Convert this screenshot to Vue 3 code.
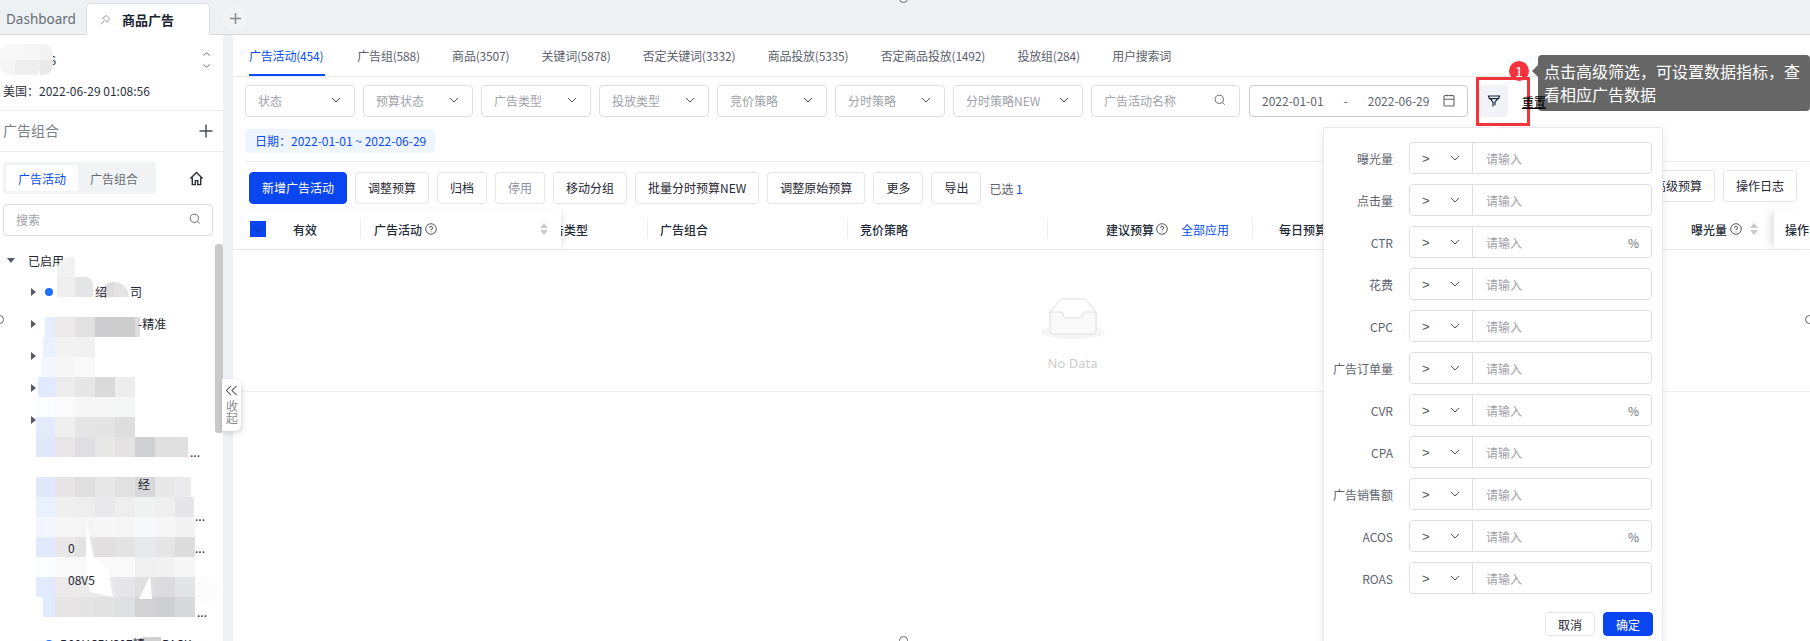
<script setup>
const tabs = ['广告活动(454)', '广告组(588)', '商品(3507)', '关键词(5878)', '否定关键词(3332)', '商品投放(5335)', '否定商品投放(1492)', '投放组(284)', '用户搜索词']
const selects = [
  { t: '状态' }, { t: '预算状态' }, { t: '广告类型' }, { t: '投放类型' },
  { t: '竞价策略' }, { t: '分时策略' }, { t: '分时策略NEW', wide: true }
]
const actions = ['调整预算', '归档', '停用', '移动分组', '批量分时预算NEW', '调整原始预算', '更多', '导出']
const metrics = [
  { l: '曝光量' }, { l: '点击量' }, { l: 'CTR', p: true }, { l: '花费' }, { l: 'CPC' }, { l: '广告订单量' },
  { l: 'CVR', p: true }, { l: 'CPA' }, { l: '广告销售额' }, { l: 'ACOS', p: true }, { l: 'ROAS' }
]
const treeRows = [
  { caret: true, dot: true, frags: [{ t: '绍', x: 95 }, { t: '司', x: 130 }] },
  { caret: true, dot: true, frags: [{ t: '-精准', x: 138 }] },
  { caret: true, frags: [] },
  { caret: true, frags: [] },
  { caret: true, frags: [] },
  { frags: [{ t: '...', x: 190 }] },
  { frags: [{ t: '经', x: 138 }] },
  { frags: [{ t: '...', x: 195 }] },
  { frags: [{ t: '0', x: 68 }, { t: '...', x: 195 }] },
  { frags: [{ t: '08V5', x: 68 }] },
  { dot: true, frags: [{ t: '...', x: 197 }] },
  { dot: true, frags: [{ t: 'B00HCBVS07精', x: 60 }, { t: 'PACK', x: 162 }] }
]
const rawMosaic = [
  { x: 57, c: ['#f2f2f2'], rl: 14 },
  { x: 57, c: ['#eeeeee', '#e4e5e5'], lw: 18, r: 8 },
  { c: [] },
  { x: 45, c: ['#e6edfd', '#ebe9ea', '#e2e1e1', '#cdcdcf', '#cdcdce', '#dddddd'], lw: 5 },
  { x: 43, c: ['#e9f0fe', '#f3f2f2', '#f1f1f1'] },
  { x: 41, c: ['#f4f7ff', '#f6f6f6', '#f9f9f9'] },
  { x: 38, c: ['#e0e9fd', '#ececec', '#e7e6e7', '#dadada', '#ededed'] },
  { x: 37, c: ['#fcfdff', '#fbfbfb', '#f7f7f7', '#f6f6f6', '#f5f6f6'] },
  { x: 36, c: ['#e2eafb', '#efefef', '#e5e5e5', '#e4e4e4', '#dedede'] },
  { x: 36, c: ['#e0e9fc', '#e8e6e6', '#dfdfe3', '#e8e8e6', '#e4e2e2', '#cfd0d3', '#dfdfdf', '#e0e0e0'], lw: 13 },
  { c: [] },
  { x: 36, c: ['#e0e9fc', '#e7e5e5', '#e0e0e1', '#e7e7e7', '#e2e1e1', '#d8d8da', '#e8e8e8', '#ebebed'], lw: 16 },
  { x: 36, c: ['#e9f0fe', '#efefef', '#eeeeee', '#e9e9eb', '#eeeeef', '#f0f1f1', '#efefef', '#e6e6e8'], lw: 19 },
  { x: 36, c: ['#f4f7ff', '#f6f6f6', '#f5f5f5', '#f7f7f7', '#f6f6f6', '#f7f8f9', '#f6f6f6', '#f3f3f3'] },
  { x: 36, c: ['#e1eafd', '#e9e7e7', '#e3e3e3', '#e1dfe0', '#e3e3e3', '#e7eaea', '#e5e5e5', '#dcdcdd'] },
  { x: 36, c: ['#fcfdff', '#f9f9f9', '#f8f9f8', '#f8f9f8', '#f8f9f8', '#f0f0f0', '#f1f1f1', '#f6f6f6'] },
  { x: 36, c: ['#e2ebfd', '#ebe9e9', '#ecebeb', '#eae8ea', '#e6e6e8', '#dfdfdf', '#dcdcde', '#e3e4e5'] },
  { x: 43, c: ['#e2ebfd', '#e6e4e4', '#e4e4e4', '#e2e2e2', '#dfe0e4', '#d2d1d3', '#cecfd0', '#d8d9da'] }
]
const mosaic = rawMosaic.map((row) => {
  const start = row.x || 36
  const cells = row.c.map((color, i) => {
    let width = 20
    if (i === 0) width = start < 55 ? 55 - start : 75 - start
    if (i === row.c.length - 1 && row.lw) width = row.lw
    return { color, width }
  })
  return { pad: start - 36, cells, r: row.r || 0, rl: row.rl || 0 }
})
</script>

<template>
  <div class="page">
    <header class="tabbar">
      <span class="tb-dash">Dashboard</span>
      <div class="tb-active">
        <svg class="pin" viewBox="0 0 14 14" width="12" height="12" fill="none" stroke="#9aa0a8" stroke-width="1.1">
          <path d="M8.3 1.5 12.5 5.7 11.3 6.3 9.3 9.8 4.2 4.7 7.7 2.7ZM6.2 7.8 2 12" />
        </svg>
        <span class="tb-title">商品广告</span>
      </div>
      <div class="tb-add">
        <svg viewBox="0 0 14 14" width="13" height="13" stroke="#858b93" stroke-width="1.6"><path d="M7 1v12M1 7h12" /></svg>
      </div>
    </header>

    <div class="body">
      <aside class="side">
        <div class="acct">
          <span class="acct-name">S</span>
          <svg viewBox="0 0 10 20" width="9" height="18" fill="none" stroke="#666" stroke-width="1"><path d="M1.5 5 5 2l3.5 3M1.5 15 5 18l3.5-3" /></svg>
        </div>
        <div class="acct-time">美国：2022-06-29 01:08:56</div>
        <div class="grp-head">
          <span>广告组合</span>
          <svg viewBox="0 0 14 14" width="14" height="14" stroke="#4a4f57" stroke-width="1.5"><path d="M7 .5v13M.5 7h13" /></svg>
        </div>
        <div class="seg-row">
          <div class="seg">
            <span class="seg-on">广告活动</span>
            <span class="seg-off">广告组合</span>
          </div>
          <svg class="home" viewBox="0 0 16 16" width="15" height="15" fill="none" stroke="#2b3038" stroke-width="1.5">
            <path d="M1.5 8 8 1.5 14.5 8M3.5 7v7.5h3.2v-4.2h2.6v4.2h3.2V7" />
          </svg>
        </div>
        <div class="search">
          <span>搜索</span>
          <svg viewBox="0 0 14 14" width="12" height="12" fill="none" stroke="#666" stroke-width="1.1"><circle cx="6.2" cy="6.2" r="4.8" /><path d="m9.8 9.8 2.6 2.6" /></svg>
        </div>
        <div class="tree">
          <div class="tree-head">
            <i class="caret-down"></i>
            <span>已启用</span>
          </div>
          <div v-for="(row, i) in treeRows" :key="i" class="tree-row">
            <i v-if="row.caret" class="caret-right"></i>
            <i v-if="row.dot" class="dot"></i>
            <span v-for="f in row.frags" :key="f.t" class="frag" :style="{ left: f.x + 'px' }">{{ f.t }}</span>
          </div>
        </div>
        <div class="mosaic">
          <div v-for="(row, i) in mosaic" :key="i" class="m-row" :style="{ paddingLeft: row.pad + 'px' }">
            <span
              v-for="(cell, j) in row.cells"
              :key="j"
              class="m-cell"
              :style="{
                width: cell.width + 'px',
                background: cell.color,
                borderTopRightRadius: j === row.cells.length - 1 ? row.r + 'px' : 0,
                borderTopLeftRadius: j === 0 ? row.rl + 'px' : 0
              }"
            ></span>
          </div>
          <svg class="m-white" width="233" height="384" viewBox="36 257 197 384">
            <polygon points="68,519 76,558 90,567 95,597 72,592 68,577" fill="#fff" />
            <polygon points="121,599 132,576 134,599" fill="#fff" />
          </svg>
        </div>
        <span class="m-blob m-blob-a"></span>
        <span class="m-blob m-blob-b"></span>
        <span class="m-blob m-blob-c"></span>
        <span class="m-blob m-blob-d"></span>
        <span class="m-blob m-blob-e"></span>
        <span class="m-blob m-blob-f"></span>
        <span class="m-blob m-blob-g"></span>
        <span class="m-blob m-blob-h"></span>
        <span class="m-blob m-blob-i"></span>
        <span class="m-blob m-blob-j"></span>
        <span class="scroll"></span>
      </aside>

      <div class="gutter">
        <div class="collapse">
          <svg viewBox="0 0 14 12" width="13" height="11" fill="none" stroke="#555" stroke-width="1.1"><path d="M6.5 1 1.5 6l5 5M12.5 1l-5 5 5 5" /></svg>
          <span class="vtext">收起</span>
        </div>
      </div>

      <main class="main">
        <nav class="tabs">
          <span v-for="(t, i) in tabs" :key="t" class="tab" :class="{ 'tab-on': i === 0 }">{{ t }}</span>
        </nav>

        <div class="filters">
          <div v-for="s in selects" :key="s.t" class="sel" :class="{ 'sel-wide': s.wide }">
            <span>{{ s.t }}</span>
            <svg viewBox="0 0 10 6" width="10" height="6" fill="none" stroke="#555" stroke-width="1"><path d="m1 1 4 4 4-4" /></svg>
          </div>
          <div class="sel sel-name">
            <span>广告活动名称</span>
            <svg viewBox="0 0 14 14" width="12" height="12" fill="none" stroke="#666" stroke-width="1.1"><circle cx="6.2" cy="6.2" r="4.8" /><path d="m9.8 9.8 2.6 2.6" /></svg>
          </div>
          <div class="date">
            <span>2022-01-01</span>
            <span class="date-sep">-</span>
            <span>2022-06-29</span>
            <svg viewBox="0 0 12 13" width="12" height="13" fill="none" stroke="#666" stroke-width="1.1"><rect x="1" y="1.5" width="10" height="10.5" rx="1" /><path d="M1 5.2h10M4 .5v2M8 .5v2" /></svg>
          </div>
          <div class="fbtn">
            <svg viewBox="0 0 14 14" width="14" height="14" fill="none" stroke="#14233f" stroke-width="1.2"><path d="M1.5 2h11l-.9 2.6H2.4zM3.4 4.8 6 8.2v4.4M10.6 4.8 8 8.2v3" /></svg>
          </div>
          <span class="reset">重置</span>
        </div>

        <div class="pill-row"><span class="pill">日期：2022-01-01 ~ 2022-06-29</span></div>

        <div class="actions">
          <div class="act-left">
            <button class="btn btn-primary">新增广告活动</button>
            <button v-for="a in actions" :key="a" class="btn" :class="{ 'btn-dim': a === '停用' }">{{ a }}</button>
            <span class="picked">已选 <b>1</b></span>
          </div>
          <div class="act-right">
            <button class="btn">高级预算</button>
            <button class="btn">操作日志</button>
          </div>
        </div>

        <div class="thead">
          <div class="fixed-left">
            <span class="check"><svg viewBox="0 0 16 16" width="16" height="16" fill="none" stroke="#0a3fc4" stroke-width="1.4"><path d="m3.5 5 4.5 6 4.5-6" /></svg></span>
            <span class="th-valid">有效</span>
            <div class="th-camp">
              <span>广告活动</span>
              <svg class="qm" viewBox="0 0 12 12" width="12" height="12" fill="none" stroke="#444" stroke-width=".9"><circle cx="6" cy="6" r="5.3" /><path d="M4.4 4.7A1.6 1.6 0 1 1 6 6.5v.8M6 8.6v.7" /></svg>
              <span class="sorter"><i class="up"></i><i class="down"></i></span>
            </div>
          </div>
          <div class="th th-type"><span>广告类型</span></div>
          <div class="th th-200">广告组合</div>
          <div class="th th-200">竞价策略</div>
          <div class="th th-budget">
            <span>建议预算</span>
            <svg class="qm" viewBox="0 0 12 12" width="12" height="12" fill="none" stroke="#444" stroke-width=".9"><circle cx="6" cy="6" r="5.3" /><path d="M4.4 4.7A1.6 1.6 0 1 1 6 6.5v.8M6 8.6v.7" /></svg>
            <span class="link">全部应用</span>
          </div>
          <div class="th th-daily">每日预算</div>
          <div class="th-imp">
            <span>曝光量</span>
            <svg class="qm" viewBox="0 0 12 12" width="12" height="12" fill="none" stroke="#444" stroke-width=".9"><circle cx="6" cy="6" r="5.3" /><path d="M4.4 4.7A1.6 1.6 0 1 1 6 6.5v.8M6 8.6v.7" /></svg>
            <span class="sorter"><i class="up"></i><i class="down"></i></span>
          </div>
          <div class="fixed-right">操作</div>
        </div>

        <div class="empty">
          <svg width="64" height="41" viewBox="0 0 64 41">
            <g transform="translate(0 1)" fill="none" fill-rule="evenodd">
              <ellipse fill="#f5f5f5" cx="32" cy="33" rx="32" ry="7" />
              <g fill-rule="nonzero" stroke="#dedede">
                <path d="M55 12.76L44.854 1.258C44.367.474 43.656 0 42.907 0H21.093c-.749 0-1.46.474-1.947 1.257L9 12.761V22h46v-9.24z" />
                <path d="M41.613 15.931c0-1.605.994-2.93 2.227-2.931H55v18.137C55 33.26 53.68 35 52.05 35h-40.1C10.32 35 9 33.259 9 31.137V13h11.16c1.233 0 2.227 1.323 2.227 2.928v.022c0 1.605 1.005 2.901 2.237 2.901h14.752c1.232 0 2.237-1.308 2.237-2.913v-.007z" fill="#fafafa" />
              </g>
            </g>
          </svg>
          <span>No Data</span>
        </div>
      </main>
    </div>

    <section class="popover">
      <i class="pop-arrow"></i>
      <div v-for="m in metrics" :key="m.l" class="pop-row">
        <label>{{ m.l }}</label>
        <div class="pop-group">
          <div class="pop-op">
            <span class="gt">&gt;</span>
            <svg viewBox="0 0 10 6" width="10" height="6" fill="none" stroke="#555" stroke-width="1"><path d="m1 1 4 4 4-4" /></svg>
          </div>
          <div class="pop-input">
            <span>请输入</span>
            <span v-if="m.p" class="pct">%</span>
          </div>
        </div>
      </div>
      <div class="pop-foot">
        <button class="btn btn-sm">取消</button>
        <button class="btn btn-sm btn-primary">确定</button>
      </div>
    </section>

    <div class="redbox"></div>
    <div class="badge">1</div>
    <div class="tip">点击高级筛选，可设置数据指标，查看相应广告数据</div>

    <i class="handle handle-top"></i>
    <i class="handle handle-bottom"></i>
    <i class="handle handle-left"></i>
    <i class="handle handle-right"></i>
  </div>
</template>

<style scoped>
.page {
  position: relative;
  width: 1810px;
  height: 641px;
  overflow: hidden;
  background: #fff;
  display: flex;
  flex-direction: column;
  font-family: "Noto Sans CJK SC", "Noto Sans", sans-serif;
  font-size: 12px;
  color: #1f2633;
}
.tabbar {
  height: 35px;
  box-sizing: border-box;
  flex: none;
  background: #eef1f4;
  border-bottom: 1px solid #d6d8db;
  display: flex;
  align-items: flex-end;
  position: relative;
}
.tb-dash {
  width: 86px;
  box-sizing: border-box;
  padding-left: 6px;
  height: 34px;
  line-height: 38px;
  font-size: 13.5px;
  color: #666c75;
  font-family: "Noto Sans", sans-serif;
}
.tb-active {
  width: 124px;
  height: 32px;
  margin-bottom: -1px;
  box-sizing: border-box;
  background: #fff;
  border: 1px solid #dcdfe3;
  border-bottom: 0;
  border-radius: 5px 5px 0 0;
  display: flex;
  align-items: center;
  padding-left: 12px;
}
.tb-title {
  margin-left: 11px;
  font-size: 13px;
  font-weight: 700;
  color: #1b2230;
}
.tb-add {
  width: 24px;
  height: 24px;
  border-radius: 50%;
  background: #f1f3f6;
  margin: 0 0 4px 13px;
  display: flex;
  align-items: center;
  justify-content: center;
}
.body {
  flex: 1;
  display: flex;
  min-height: 0;
}
.side {
  position: relative;
  width: 223px;
  flex: none;
  overflow: hidden;
  background: #fff;
}
.acct {
  height: 49px;
  box-sizing: border-box;
  padding: 16px 12px 0 49px;
  display: flex;
  justify-content: space-between;
  align-items: flex-start;
  color: #333;
}
.acct-name {
  line-height: 18px;
}
.acct-time {
  height: 26px;
  padding-left: 3px;
  line-height: 14px;
  color: #2b313c;
  border-bottom: 1px solid #e9ebee;
}
.grp-head {
  height: 40px;
  padding: 0 10px 0 3px;
  display: flex;
  justify-content: space-between;
  align-items: center;
  font-size: 14px;
  color: #7a7f87;
  border-bottom: 1px solid #e9ebee;
}
.grp-head span {
  margin-top: -2px;
}
.seg-row {
  display: flex;
  align-items: center;
  margin-top: 10px;
  padding-left: 3px;
}
.seg {
  width: 153px;
  height: 32px;
  box-sizing: border-box;
  padding: 3px;
  background: #f2f3f5;
  border-radius: 4px;
  display: flex;
}
.seg span {
  width: 72px;
  text-align: center;
  line-height: 27px;
  border-radius: 3px;
}
.seg-on {
  background: #fff;
  color: #0a4df2;
}
.seg-off {
  color: #666c75;
}
.home {
  margin-left: 33px;
}
.search {
  margin: 10px 0 0 3px;
  width: 210px;
  height: 32px;
  box-sizing: border-box;
  border: 1px solid #dcdfe4;
  border-radius: 4px;
  padding: 0 11px 2px 12px;
  display: flex;
  justify-content: space-between;
  align-items: center;
  color: #9ea2a9;
}
.tree {
  margin-top: 8px;
}
.tree-head,
.tree-row {
  position: relative;
  height: 32px;
  display: flex;
  align-items: center;
}
.tree-head span {
  margin-left: 28px;
  color: #20252e;
}
.caret-down {
  position: absolute;
  left: 7px;
  top: 14px;
  border: 4px solid transparent;
  border-top: 5px solid #555b65;
  border-bottom: 0;
}
.caret-right {
  position: absolute;
  left: 31px;
  top: 12px;
  border: 4.5px solid transparent;
  border-left: 5px solid #555b65;
  border-right: 0;
}
.dot {
  position: absolute;
  left: 45px;
  top: 12px;
  width: 8px;
  height: 8px;
  border-radius: 50%;
  background: #1f6fff;
}
.frag {
  position: absolute;
  top: 8px;
  line-height: 16px;
  z-index: 3;
  white-space: nowrap;
}
.mosaic {
  position: absolute;
  left: 36px;
  top: 222px;
  z-index: 2;
}
.m-row {
  display: flex;
  height: 20px;
}
.m-cell {
  display: block;
  height: 20px;
  flex: none;
}
.m-white {
  position: absolute;
  left: 0;
  top: 0;
}
.m-blob {
  position: absolute;
  z-index: 2;
  display: block;
}
.m-blob-a {
  left: 100px;
  top: 247px;
  width: 14px;
  height: 15px;
  background: #dddddd;
  border-radius: 14px 0 0 0;
}
.m-blob-b {
  left: 114px;
  top: 247px;
  width: 15px;
  height: 15px;
  background: #e4e2e3;
  border-radius: 0 15px 0 0;
}
.m-blob-c {
  left: 0;
  top: 9px;
  width: 24px;
  height: 16px;
  background: #f8f8f8;
  border-radius: 10px 0 0 0;
}
.m-blob-d {
  left: 24px;
  top: 9px;
  width: 16px;
  height: 16px;
  background: #f6f6f6;
}
.m-blob-e {
  left: 40px;
  top: 9px;
  width: 13px;
  height: 16px;
  background: #f3f3f3;
  border-radius: 0 10px 0 0;
}
.m-blob-f {
  left: 0;
  top: 25px;
  width: 15px;
  height: 15px;
  background: #f5f5f5;
  border-radius: 0 0 0 10px;
}
.m-blob-g {
  left: 15px;
  top: 25px;
  width: 25px;
  height: 15px;
  background: #eeeeee;
  border-radius: 0 0 6px 0;
}
.m-blob-h {
  left: 40px;
  top: 25px;
  width: 13px;
  height: 15px;
  background: #e9e9e9;
  border-radius: 0 0 10px 0;
}
.m-blob-i {
  left: 195px;
  top: 542px;
  width: 25px;
  height: 28px;
  background: #fbfcfb;
  border-radius: 0 14px 14px 0;
}
.m-blob-j {
  left: 142px;
  top: 602px;
  width: 19px;
  height: 10px;
  background: #d0d0d0;
}
.scroll {
  position: absolute;
  left: 215px;
  top: 209px;
  width: 8px;
  height: 189px;
  background: #c9c9c9;
  border-radius: 3px;
  z-index: 2;
}
.gutter {
  position: relative;
  width: 10px;
  flex: none;
  background: #eef1f5;
}
.collapse {
  position: absolute;
  left: -1px;
  top: 344px;
  width: 19px;
  height: 52px;
  box-sizing: border-box;
  padding-top: 6px;
  background: #fff;
  border-radius: 0 6px 6px 0;
  box-shadow: 1px 2px 5px rgba(0, 0, 0, .16);
  display: flex;
  flex-direction: column;
  align-items: center;
  color: #8c8c8c;
  z-index: 4;
}
.vtext {
  writing-mode: vertical-rl;
  font-size: 12px;
  line-height: 14px;
}
.collapse svg {
  margin-bottom: 4px;
}
.main {
  flex: 1;
  min-width: 0;
}
.tabs {
  height: 42px;
  box-sizing: border-box;
  padding-left: 16px;
  display: flex;
  gap: 32.3px;
  border-bottom: 1px solid #e5e7ea;
}
.tab {
  height: 41px;
  box-sizing: border-box;
  padding-top: 13px;
  line-height: 16px;
  color: #5a616c;
  white-space: nowrap;
  letter-spacing: -0.2px;
}
.tab-on {
  width: 76px;
  color: #0a4df2;
  border-bottom: 2px solid #0a4df2;
}
.filters {
  display: flex;
  align-items: center;
  margin-top: 8px;
  padding-left: 12px;
  gap: 8px;
  height: 32px;
}
.sel {
  width: 110px;
  height: 32px;
  box-sizing: border-box;
  border: 1px solid #dcdfe4;
  border-radius: 4px;
  padding: 0 13px 2px 12px;
  display: flex;
  align-items: center;
  justify-content: space-between;
  color: #9ea2a9;
  white-space: nowrap;
}
.sel-wide {
  width: 130px;
}
.sel-name {
  width: 149px;
}
.date {
  width: 219px;
  height: 32px;
  box-sizing: border-box;
  margin-left: 1px;
  border: 1px solid #c9ccd2;
  border-radius: 4px;
  padding: 0 12px 2px;
  display: flex;
  align-items: center;
  color: #5d6470;
}
.date-sep {
  margin: 0 20px;
}
.date svg {
  margin-left: auto;
}
.fbtn {
  width: 29px;
  height: 32px;
  margin-left: 3px;
  background: #f2f3f6;
  border-radius: 4px;
  display: flex;
  align-items: center;
  justify-content: center;
}
.reset {
  margin-left: 6px;
  color: #000;
  text-decoration: underline;
  position: relative;
  z-index: 7;
}
.pill-row {
  margin: 12px 0 0 12px;
  padding-bottom: 8px;
  border-bottom: 1px solid #eceef1;
  height: 24px;
}
.pill {
  display: inline-block;
  height: 24px;
  line-height: 24px;
  padding: 0 9px 0 10px;
  background: #eff5ff;
  border-radius: 4px;
  color: #0a4df2;
}
.actions {
  display: flex;
  justify-content: space-between;
  padding: 10px 13px 0 16px;
}
.act-left {
  display: flex;
  align-items: center;
  gap: 8px;
}
.act-right {
  display: flex;
  gap: 8px;
  margin-top: -2px;
  height: 32px;
}
.btn {
  height: 32px;
  padding: 0 12px 2px;
  box-sizing: border-box;
  background: #fff;
  border: 1px solid #e3e5e9;
  border-radius: 4px;
  font: inherit;
  color: #1f2633;
  white-space: nowrap;
}
.btn-primary {
  background: #0a46ef;
  border-color: #0a46ef;
  color: #fff;
}
.btn-dim {
  color: #8c9098;
}
.btn-sm {
  width: 50px;
  height: 24px;
  padding: 0;
}
.picked {
  color: #5a616c;
}
.picked b {
  font-weight: 400;
  color: #0a4df2;
}
.thead {
  margin-top: 6px;
  height: 40px;
  box-sizing: border-box;
  padding-bottom: 1px;
  border-bottom: 1px solid #e8eaed;
  display: flex;
  font-weight: 500;
  color: #222a38;
  position: relative;
}
.fixed-left {
  width: 328px;
  flex: none;
  display: flex;
  align-items: center;
  background: #fff;
  position: relative;
  box-shadow: 4px 0 6px -2px rgba(0, 0, 0, .10);
  z-index: 1;
}
.check {
  margin-left: 17px;
  width: 16px;
  height: 16px;
  background: #0a46ef;
  flex: none;
}
.check svg {
  display: block;
}
.th-valid {
  margin-left: 27px;
  width: 67px;
}
.th-camp {
  flex: 1;
  display: flex;
  align-items: center;
  height: 20px;
  padding-left: 13px;
  box-sizing: border-box;
  border-left: 1px solid #eceef1;
}
.qm {
  margin-left: 3px;
  flex: none;
}
.sorter {
  margin-left: auto;
  margin-right: 13px;
  display: flex;
  flex-direction: column;
  gap: 2px;
}
.sorter i {
  display: block;
  border: 4px solid transparent;
}
.sorter .up {
  border-top: 0;
  border-bottom: 5px solid #c7c9cc;
}
.sorter .down {
  border-bottom: 0;
  border-top: 5px solid #c7c9cc;
}
.th {
  display: flex;
  align-items: center;
  box-sizing: border-box;
  height: 20px;
  margin-top: 9px;
  padding-left: 12px;
  border-left: 1px solid #eceef1;
  flex: none;
  white-space: nowrap;
}
.th-type {
  width: 86px;
  padding-left: 0;
  border-left: 0;
  overflow: hidden;
}
.th-type span {
  margin-left: -21px;
}
.th-200 {
  width: 200px;
}
.th-budget {
  width: 205px;
  justify-content: flex-end;
  padding-right: 23px;
}
.th-budget .qm {
  margin-left: 2px;
}
.link {
  margin-left: 13px;
  font-weight: 400;
  color: #0a4df2;
}
.th-daily {
  padding-left: 26px;
  flex: 1;
}
.th-imp {
  display: flex;
  align-items: center;
  width: 90px;
  flex: none;
  padding-left: 8px;
  box-sizing: border-box;
  background: #fff;
}
.th-imp .sorter {
  margin-right: 15px;
}
.fixed-right {
  width: 37px;
  flex: none;
  display: flex;
  align-items: center;
  padding-left: 11px;
  box-sizing: border-box;
  white-space: nowrap;
  overflow: hidden;
  background: #fff;
  box-shadow: -6px 0 7px -3px rgba(0, 0, 0, .12);
  border-left: 1px solid #eceef1;
}
.empty {
  height: 142px;
  box-sizing: border-box;
  padding: 48px 0 0 102px;
  border-bottom: 1px solid #eceef1;
  display: flex;
  flex-direction: column;
  align-items: center;
  color: #cdcdcd;
  font-size: 13px;
  font-family: "Noto Sans", sans-serif;
  line-height: 18px;
}
.empty svg {
  margin-bottom: 15px;
}
.popover {
  position: absolute;
  left: 1323px;
  top: 127px;
  width: 340px;
  height: 530px;
  box-sizing: border-box;
  padding-top: 14px;
  background: #fff;
  border: 1px solid #e6e8eb;
  border-radius: 3px;
  box-shadow: 0 3px 12px rgba(0, 0, 0, .08);
  z-index: 5;
}
.pop-arrow {
  position: absolute;
  left: 167px;
  top: -4px;
  width: 7px;
  height: 7px;
  background: #fff;
  border: 1px solid #e6e8eb;
  border-right: 0;
  border-bottom: 0;
  transform: rotate(45deg);
}
.pop-row {
  display: flex;
  align-items: center;
  height: 32px;
  margin-bottom: 10px;
}
.pop-row label {
  width: 69px;
  text-align: right;
  color: #5d6470;
}
.pop-group {
  width: 243px;
  height: 32px;
  margin-left: 16px;
  box-sizing: border-box;
  border: 1px solid #dcdfe4;
  border-radius: 4px;
  display: flex;
}
.pop-op {
  width: 63px;
  flex: none;
  box-sizing: border-box;
  border-right: 1px solid #dcdfe4;
  padding: 0 12px;
  display: flex;
  align-items: center;
  justify-content: space-between;
  color: #555;
}
.gt {
  font-family: "Liberation Sans", sans-serif;
  font-size: 13px;
  font-weight: 400;
}
.pop-input {
  flex: 1;
  display: flex;
  align-items: center;
  justify-content: space-between;
  padding: 0 12px 0 13px;
  color: #9ea2a9;
}
.pct {
  color: #6f7580;
}
.pop-foot {
  display: flex;
  justify-content: flex-end;
  gap: 8px;
  margin-top: 18px;
  padding-right: 9px;
}
.redbox {
  position: absolute;
  left: 1476px;
  top: 77px;
  width: 54px;
  height: 49px;
  box-sizing: border-box;
  border: 3px solid #f2343b;
  z-index: 6;
}
.badge {
  position: absolute;
  left: 1509px;
  top: 61px;
  width: 20px;
  height: 20px;
  border-radius: 50%;
  background: #f5333f;
  color: #fff;
  font-size: 14px;
  line-height: 20px;
  text-align: center;
  z-index: 7;
}
.tip {
  position: absolute;
  left: 1538px;
  top: 55px;
  width: 272px;
  height: 56px;
  box-sizing: border-box;
  padding: 5px 8px 5px 6px;
  background: #666;
  border-radius: 4px;
  color: #fff;
  font-size: 16px;
  line-height: 23px;
  z-index: 6;
}
.tip::before {
  content: "";
  position: absolute;
  left: -6px;
  top: 10px;
  border: 6px solid transparent;
  border-right: 6px solid #666;
  border-left: 0;
}
.handle {
  position: absolute;
  width: 9px;
  height: 9px;
  box-sizing: border-box;
  border: 1px solid #666;
  border-radius: 50%;
  background: #fff;
  z-index: 8;
}
.handle-top {
  left: 899px;
  top: -6px;
}
.handle-bottom {
  left: 899px;
  top: 636px;
}
.handle-left {
  left: -5px;
  top: 315px;
}
.handle-right {
  left: 1805px;
  top: 315px;
}
</style>

<style>
html, body {
  margin: 0;
  padding: 0;
  overflow: hidden;
  background: #fff;
}
</style>
